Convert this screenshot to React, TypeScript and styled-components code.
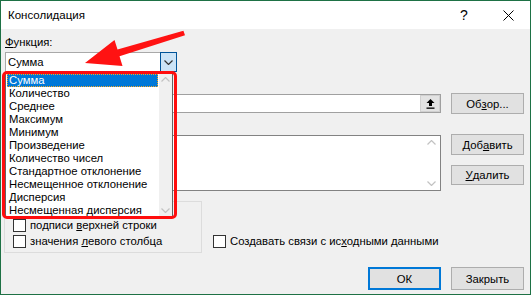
import React from "react";
import styled, { createGlobalStyle } from "styled-components";

const GlobalStyle = createGlobalStyle`
  html, body {
    margin: 0;
    padding: 0;
    background: #ffffff;
  }
  body {
    font-family: "Liberation Sans", Arial, sans-serif;
    font-size: 11.3px;
    color: #000000;
  }
`;

const Window = styled.div`
  position: relative;
  width: 531px;
  height: 295px;
  box-sizing: border-box;
  border: 1px solid #1e7145;
  background: #f0f0f0;
  display: flex;
  flex-direction: column;
  overflow: hidden;
`;

const TitleBar = styled.div`
  height: 28px;
  background: #ffffff;
  display: flex;
  align-items: center;
  padding-left: 7px;
`;

const Title = styled.div`
  flex: 1;
  font-size: 11.5px;
`;

const TitleButton = styled.div`
  width: 44px;
  height: 28px;
  display: flex;
  align-items: center;
  justify-content: center;
  font-size: 14px;
`;

const Body = styled.div`
  flex: 1;
  display: flex;
  flex-direction: column;
  padding: 6px 6px 4px 4px;
`;

const Label = styled.div<{ $top: number }>`
  height: 14px;
  line-height: 14px;
  margin-top: ${(p) => p.$top}px;
`;

const U = styled.span`
  text-decoration: underline;
  text-underline-offset: 1px;
`;

const Row = styled.div<{ $top: number }>`
  display: grid;
  grid-template-columns: 436px 73px;
  column-gap: 10px;
  margin-top: ${(p) => p.$top}px;
  align-items: start;
`;

const ButtonColumn = styled.div`
  display: flex;
  flex-direction: column;
  gap: 10px;
`;

const Button = styled.div<{ $h?: number; $default?: boolean }>`
  box-sizing: border-box;
  width: 73px;
  height: ${(p) => p.$h ?? 21}px;
  background: #e1e1e1;
  border: ${(p) => (p.$default ? "2px solid #0078d7" : "1px solid #adadad")};
  display: flex;
  align-items: center;
  justify-content: center;
`;

const Combo = styled.div`
  position: relative;
  box-sizing: border-box;
  width: 172px;
  height: 20px;
  margin-top: 3px;
  border: 1px solid #a9a9a9;
  background: #ffffff;
  display: flex;
`;

const ComboText = styled.div`
  flex: 1;
  line-height: 18px;
  padding-left: 2px;
`;

const ComboButton = styled.div`
  box-sizing: border-box;
  width: 17px;
  height: 20px;
  margin: -1px -1px -1px 0;
  background: #cce4f7;
  border: 1px solid #005499;
  display: flex;
  align-items: center;
  justify-content: center;
`;

const DropList = styled.div`
  position: absolute;
  top: 19px;
  left: -1px;
  width: 168px;
  height: 146px;
  box-sizing: border-box;
  background: #ffffff;
  border: 1px solid #646464;
  display: flex;
  z-index: 5;
`;

const DropItems = styled.div`
  flex: 1;
  padding: 1px 1px 0 1px;
`;

const DropItem = styled.div<{ $selected?: boolean }>`
  box-sizing: border-box;
  height: 13px;
  line-height: 11px;
  padding-left: 1px;
  white-space: nowrap;
  background: ${(p) => (p.$selected ? "#0078d7" : "transparent")};
  color: ${(p) => (p.$selected ? "#ffffff" : "#000000")};
  border: 1px dotted ${(p) => (p.$selected ? "#f5a623" : "transparent")};
`;

const ScrollTrack = styled.div<{ $w: number }>`
  width: ${(p) => p.$w}px;
  background: #f0f0f0;
  display: flex;
  flex-direction: column;
  justify-content: space-between;
  align-items: center;
  padding: 4px 0;
`;

const WhiteTrack = styled(ScrollTrack)`
  background: #ffffff;
`;

const RedFrame = styled.div`
  position: absolute;
  top: -2px;
  left: -4px;
  right: -5px;
  bottom: -2px;
  border: 3px solid #ff0d0d;
  border-radius: 5px;
  pointer-events: none;
`;

const RefInput = styled.div`
  box-sizing: border-box;
  height: 19px;
  margin-top: 1px;
  background: #ffffff;
  border: 1px solid #a0a0a0;
  display: flex;
  justify-content: flex-end;
`;

const CollapseButton = styled.div`
  box-sizing: border-box;
  width: 20px;
  height: 17px;
  background: #e3e3e3;
  border: 1px solid #d0d0d0;
  display: flex;
  align-items: center;
  justify-content: center;
`;

const ListBox = styled.div`
  box-sizing: border-box;
  height: 56px;
  margin-top: 1px;
  background: #ffffff;
  border: 1px solid #828282;
  display: flex;
  justify-content: flex-end;
`;

const OptionsRow = styled.div`
  display: flex;
  align-items: flex-end;
  margin-top: 3px;
`;

const Group = styled.fieldset`
  box-sizing: border-box;
  width: 198px;
  margin: 0 0 0 -1px;
  padding: 9px 8px 3px 8px;
  border: 1px solid #dcdcdc;
  min-width: 0;
`;

const Legend = styled.legend`
  padding: 0 2px;
  margin-left: 4px;
  line-height: 14px;
`;

const CheckRow = styled.div<{ $ml?: number; $mb?: number }>`
  height: 16px;
  display: flex;
  align-items: center;
  gap: 4px;
  white-space: nowrap;
  margin-left: ${(p) => p.$ml ?? 0}px;
  margin-bottom: ${(p) => p.$mb ?? 0}px;
`;

const CheckBox = styled.div`
  box-sizing: border-box;
  width: 13px;
  height: 13px;
  background: #ffffff;
  border: 1px solid #333333;
`;

const FooterMain = styled.div`
  display: flex;
  justify-content: flex-end;
`;

const Arrow = styled.svg`
  position: absolute;
  left: 0;
  top: 0;
  pointer-events: none;
  z-index: 6;
`;

function Chevron({ up, color }: { up?: boolean; color: string }) {
  return (
    <svg width="9" height="5" viewBox="0 0 9 5">
      <polyline
        points={up ? "0.5,4.5 4.5,0.5 8.5,4.5" : "0.5,0.5 4.5,4.5 8.5,0.5"}
        fill="none"
        stroke={color}
        strokeWidth="1.2"
      />
    </svg>
  );
}

const functions = [
  "Сумма",
  "Количество",
  "Среднее",
  "Максимум",
  "Минимум",
  "Произведение",
  "Количество чисел",
  "Стандартное отклонение",
  "Несмещенное отклонение",
  "Дисперсия",
  "Несмещенная дисперсия",
];

export default function App() {
  return (
    <>
      <GlobalStyle />
      <Window>
        <TitleBar>
          <Title>Консолидация</Title>
          <TitleButton>?</TitleButton>
          <TitleButton>
            <svg width="11" height="11" viewBox="0 0 11 11">
              <path d="M0.5 0.5 L10.5 10.5 M10.5 0.5 L0.5 10.5" stroke="#000" strokeWidth="1" />
            </svg>
          </TitleButton>
        </TitleBar>
        <Body>
          <Label $top={0}>
            <U>Ф</U>ункция:
          </Label>
          <Combo>
            <ComboText>Сумма</ComboText>
            <ComboButton>
              <Chevron color="#333333" />
            </ComboButton>
            {/* open dropdown covers the labels below, as in the dialog */}
            <DropList>
              <DropItems>
                {functions.map((f, i) => (
                  <DropItem key={f} $selected={i === 0}>
                    {f}
                  </DropItem>
                ))}
              </DropItems>
              <ScrollTrack $w={13}>
                <Chevron up color="#c2c2c2" />
                <Chevron color="#c2c2c2" />
              </ScrollTrack>
              <RedFrame />
            </DropList>
          </Combo>

          <Label $top={6}>
            <U>С</U>сылка:
          </Label>
          <Row $top={1}>
            <RefInput>
              <CollapseButton>
                <svg width="9" height="10" viewBox="0 0 9 10">
                  <path d="M4.5 0 L8.5 4 L6 4 L6 7 L3 7 L3 4 L0.5 4 Z" fill="#000" />
                  <rect x="0.5" y="8.5" width="8" height="1.3" fill="#000" />
                </svg>
              </CollapseButton>
            </RefInput>
            <Button>
              Об<U>з</U>ор...
            </Button>
          </Row>

          <Label $top={5}>
            Список <U>д</U>иапазонов:
          </Label>
          <Row $top={1}>
            <ListBox>
              <WhiteTrack $w={17}>
                <Chevron up color="#c2c2c2" />
                <Chevron color="#c2c2c2" />
              </WhiteTrack>
            </ListBox>
            <ButtonColumn>
              <Button>
                Доб<U>а</U>вить
              </Button>
              <Button $h={20}>
                <U>У</U>далить
              </Button>
            </ButtonColumn>
          </Row>

          <OptionsRow>
            <Group>
              <Legend>Использовать метки</Legend>
              <CheckRow>
                <CheckBox />
                <span>
                  подписи <U>в</U>ерхней строки
                </span>
              </CheckRow>
              <CheckRow>
                <CheckBox />
                <span>
                  значения <U>л</U>евого столбца
                </span>
              </CheckRow>
            </Group>
            <CheckRow $ml={11} $mb={4}>
              <CheckBox />
              <span>
                Создавать связи с ис<U>х</U>одными данными
              </span>
            </CheckRow>
          </OptionsRow>

          <Row $top={14}>
            <FooterMain>
              <Button $h={23} $default>
                ОК
              </Button>
            </FooterMain>
            <Button $h={23}>Закрыть</Button>
          </Row>
        </Body>
        <Arrow width="531" height="295" viewBox="0 0 531 295">
          <polygon
            points="84,62 113.5,39 116.5,48.4 182.4,29.8 184,34.2 118.5,55.2 121.5,65"
            fill="#ff1212"
          />
        </Arrow>
      </Window>
    </>
  );
}
